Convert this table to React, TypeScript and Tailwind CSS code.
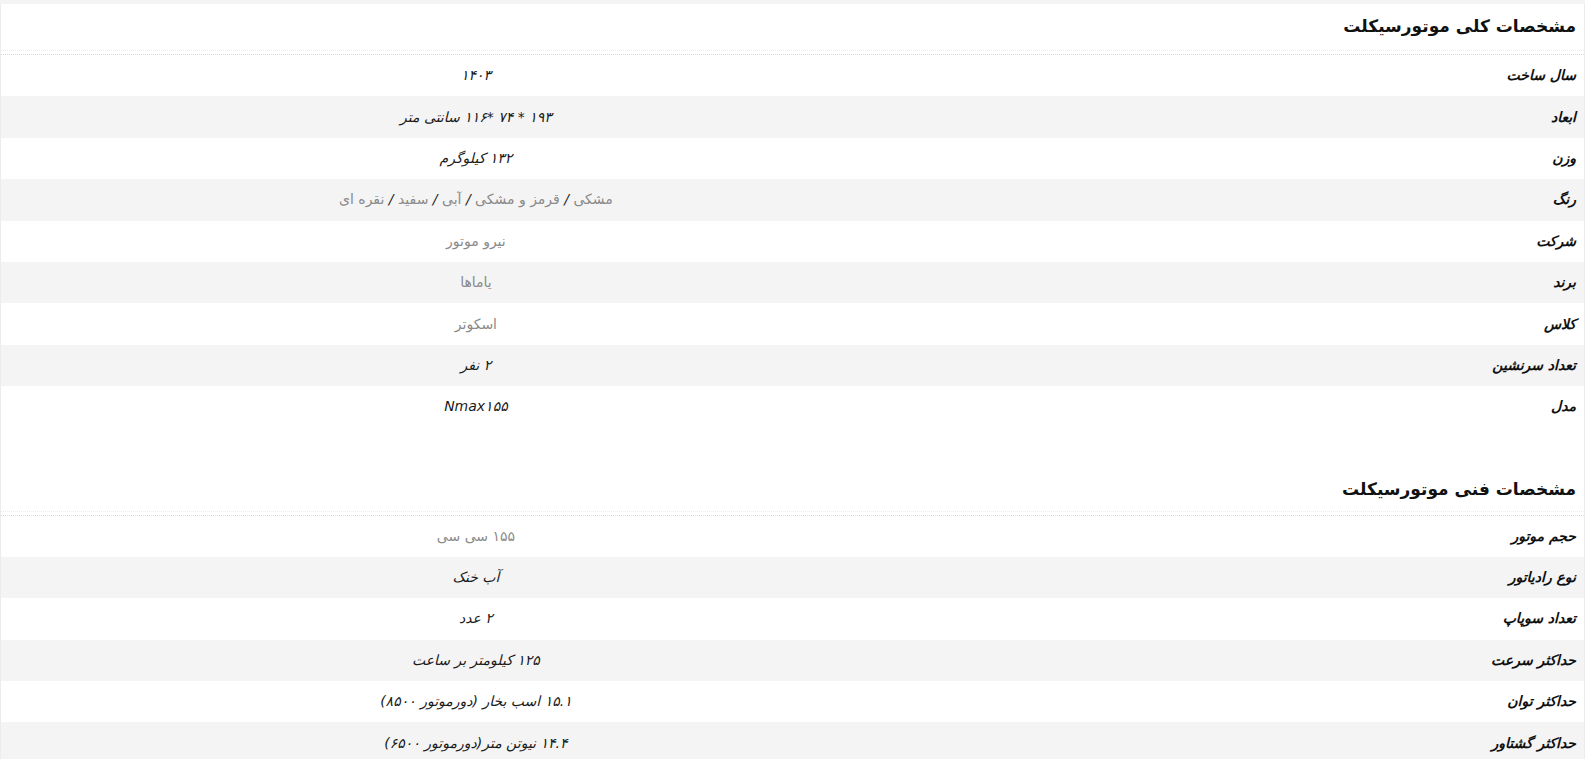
import React from "react";

type Row = { label: string; value: React.ReactNode; muted?: boolean };

const FONT = { fontFamily: '"DejaVu Sans", "Noto Sans", sans-serif' };

const sep = <span className="italic text-[#222]"> / </span>;

const general: Row[] = [
  { label: "سال ساخت", value: "۱۴۰۳" },
  { label: "ابعاد", value: "۱۹۳ * ۷۴ *۱۱۶ سانتی متر" },
  { label: "وزن", value: "۱۳۲ کیلوگرم" },
  {
    label: "رنگ",
    muted: true,
    value: (
      <>
        <span>مشکی</span>
        {sep}
        <span>قرمز و مشکی</span>
        {sep}
        <span>آبی</span>
        {sep}
        <span>سفید</span>
        {sep}
        <span>نقره ای</span>
      </>
    ),
  },
  { label: "شرکت", value: "نیرو موتور", muted: true },
  { label: "برند", value: "یاماها", muted: true },
  { label: "کلاس", value: "اسکوتر", muted: true },
  { label: "تعداد سرنشین", value: "۲ نفر" },
  { label: "مدل", value: "Nmax۱۵۵" },
];

const technical: Row[] = [
  { label: "حجم موتور", value: "۱۵۵ سی سی", muted: true },
  { label: "نوع رادیاتور", value: "آب خنک" },
  { label: "تعداد سوپاپ", value: "۲ عدد" },
  { label: "حداکثر سرعت", value: "۱۲۵ کیلومتر بر ساعت" },
  { label: "حداکثر توان", value: "۱۵.۱ اسب بخار (دورموتور ۸۵۰۰)" },
  { label: "حداکثر گشتاور", value: "۱۴.۴ نیوتن متر(دورموتور ۶۵۰۰)" },
];

function Section({ title, rows, first }: { title: string; rows: Row[]; first?: boolean }) {
  return (
    <section className={first ? "" : "mt-[41px]"}>
      <div
        className={
          (first ? "h-[47px]" : "h-[43px]") +
          " flex items-center pr-2 text-[17px] font-bold text-[#111] border-b border-dotted border-[#ececec]"
        }
      >
        <h2>{title}</h2>
      </div>
      <div className="mt-[3px] border-t border-dotted border-[#dcdcdc]">
        {rows.map((r, i) => (
          <div
            key={r.label}
            className={
              "grid grid-cols-[40%_60%] h-[41.4px] items-center " +
              (i % 2 === 1 ? "bg-[#f4f4f4]" : "bg-white")
            }
          >
            <div className="pr-2 text-right text-[14px] font-bold italic text-[#111]">{r.label}</div>
            <div
              className={
                "text-center text-[14px] " +
                (r.muted ? "text-[#8a8a8a]" : "italic text-[#1a1a1a]")
              }
            >
              {r.value}
            </div>
          </div>
        ))}
      </div>
    </section>
  );
}

export default function App() {
  return (
    <div dir="rtl" className="w-[1585px] h-[759px] overflow-hidden bg-white" style={FONT}>
      <div className="h-[4px] bg-[#f4f4f4]" />
      <div className="border-x border-[#ececec] h-[755px]">
        <Section title="مشخصات کلی موتورسیکلت" rows={general} first />
        <Section title="مشخصات فنی موتورسیکلت" rows={technical} />
      </div>
    </div>
  );
}
